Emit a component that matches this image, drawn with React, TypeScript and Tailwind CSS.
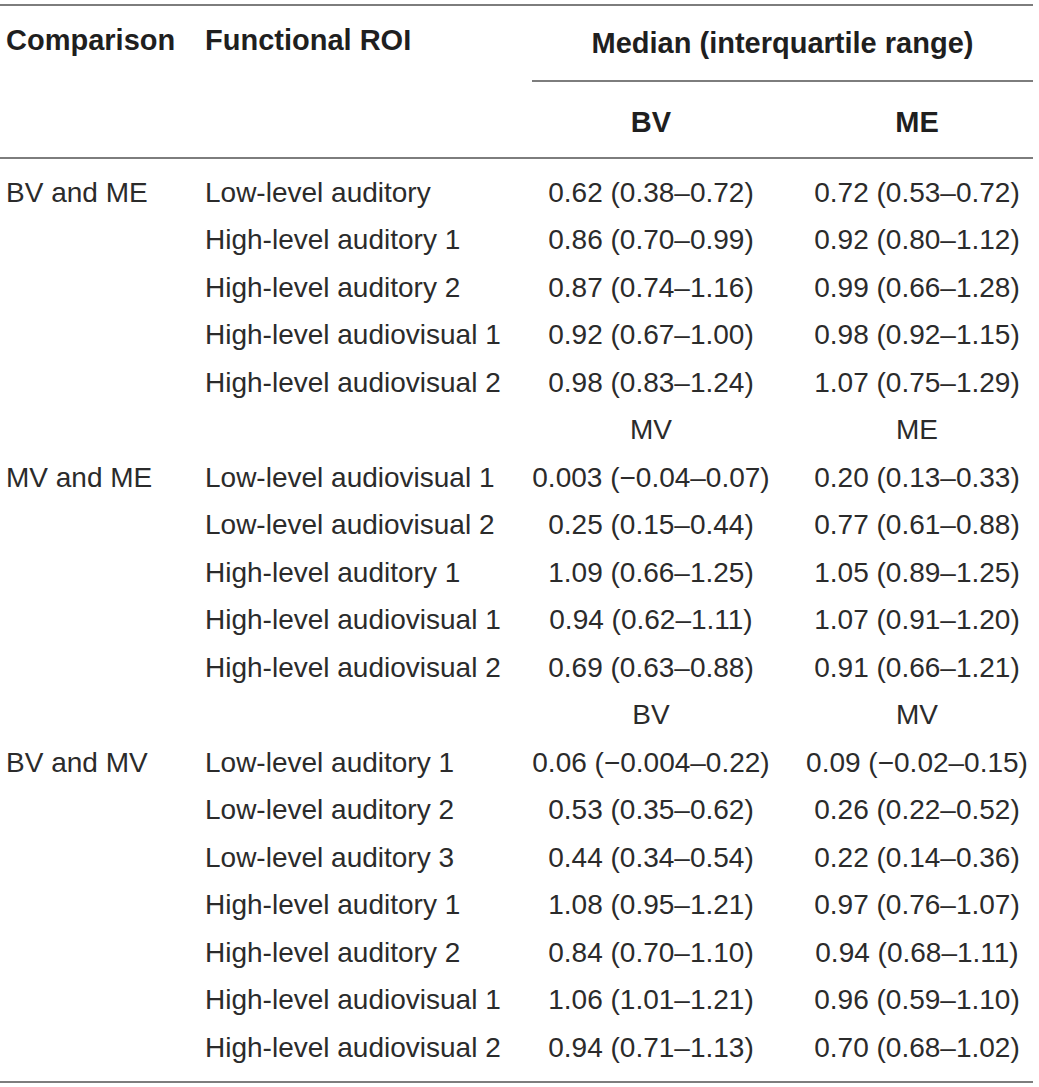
import React from "react";

type Row = { comp?: string; roi?: string; a: string; b: string; sub?: boolean };

const rows: Row[] = [
  { comp: "BV and ME", roi: "Low-level auditory", a: "0.62 (0.38–0.72)", b: "0.72 (0.53–0.72)" },
  { roi: "High-level auditory 1", a: "0.86 (0.70–0.99)", b: "0.92 (0.80–1.12)" },
  { roi: "High-level auditory 2", a: "0.87 (0.74–1.16)", b: "0.99 (0.66–1.28)" },
  { roi: "High-level audiovisual 1", a: "0.92 (0.67–1.00)", b: "0.98 (0.92–1.15)" },
  { roi: "High-level audiovisual 2", a: "0.98 (0.83–1.24)", b: "1.07 (0.75–1.29)" },
  { a: "MV", b: "ME", sub: true },
  { comp: "MV and ME", roi: "Low-level audiovisual 1", a: "0.003 (−0.04–0.07)", b: "0.20 (0.13–0.33)" },
  { roi: "Low-level audiovisual 2", a: "0.25 (0.15–0.44)", b: "0.77 (0.61–0.88)" },
  { roi: "High-level auditory 1", a: "1.09 (0.66–1.25)", b: "1.05 (0.89–1.25)" },
  { roi: "High-level audiovisual 1", a: "0.94 (0.62–1.11)", b: "1.07 (0.91–1.20)" },
  { roi: "High-level audiovisual 2", a: "0.69 (0.63–0.88)", b: "0.91 (0.66–1.21)" },
  { a: "BV", b: "MV", sub: true },
  { comp: "BV and MV", roi: "Low-level auditory 1", a: "0.06 (−0.004–0.22)", b: "0.09 (−0.02–0.15)" },
  { roi: "Low-level auditory 2", a: "0.53 (0.35–0.62)", b: "0.26 (0.22–0.52)" },
  { roi: "Low-level auditory 3", a: "0.44 (0.34–0.54)", b: "0.22 (0.14–0.36)" },
  { roi: "High-level auditory 1", a: "1.08 (0.95–1.21)", b: "0.97 (0.76–1.07)" },
  { roi: "High-level auditory 2", a: "0.84 (0.70–1.10)", b: "0.94 (0.68–1.11)" },
  { roi: "High-level audiovisual 1", a: "1.06 (1.01–1.21)", b: "0.96 (0.59–1.10)" },
  { roi: "High-level audiovisual 2", a: "0.94 (0.71–1.13)", b: "0.70 (0.68–1.02)" },
];

export default function App() {
  return (
    <div
      className="bg-white w-[1039px] h-[1087px] pt-[4px] text-[#2b2b2b]"
      style={{ fontFamily: '"Liberation Sans", Arial, sans-serif' }}
    >
      <div className="w-[1033px] border-t-[2px] border-b-[2px] border-[#7d7d7d]">
        {/* Header */}
        <div className="grid grid-cols-[199px_327px_250px_257px] border-b-[2px] border-[#7d7d7d] font-bold text-[29px] leading-none text-[#1f1f1f]">
          <div className="row-span-2 pl-[6px] pt-[20px]">Comparison</div>
          <div className="row-span-2 pl-[6px] pt-[20px]">Functional ROI</div>
          <div className="col-span-2 h-[76px] flex flex-col">
            <div className="flex-1 flex items-center justify-center pl-[6px]">Median (interquartile range)</div>
            <div className="ml-[6px] border-b-[2px] border-[#7d7d7d]" />
          </div>
          <div className="h-[75px] flex items-center justify-center pt-[6px]">BV</div>
          <div className="h-[75px] flex items-center justify-center pl-[25px] pt-[6px]">ME</div>
        </div>
        {/* Body */}
        <div className="pt-[10px] pb-[9px] text-[28px] leading-none">
          {rows.map((r, i) => (
            <div key={i} className="grid grid-cols-[199px_327px_250px_257px] h-[47.5px] items-center">
              <div className="pl-[6px] whitespace-nowrap">{r.comp ?? ""}</div>
              <div className="pl-[6px] whitespace-nowrap">{r.roi ?? ""}</div>
              <div className="text-center whitespace-nowrap">{r.a}</div>
              <div className="text-center whitespace-nowrap pl-[25px]">{r.b}</div>
            </div>
          ))}
        </div>
      </div>
    </div>
  );
}
